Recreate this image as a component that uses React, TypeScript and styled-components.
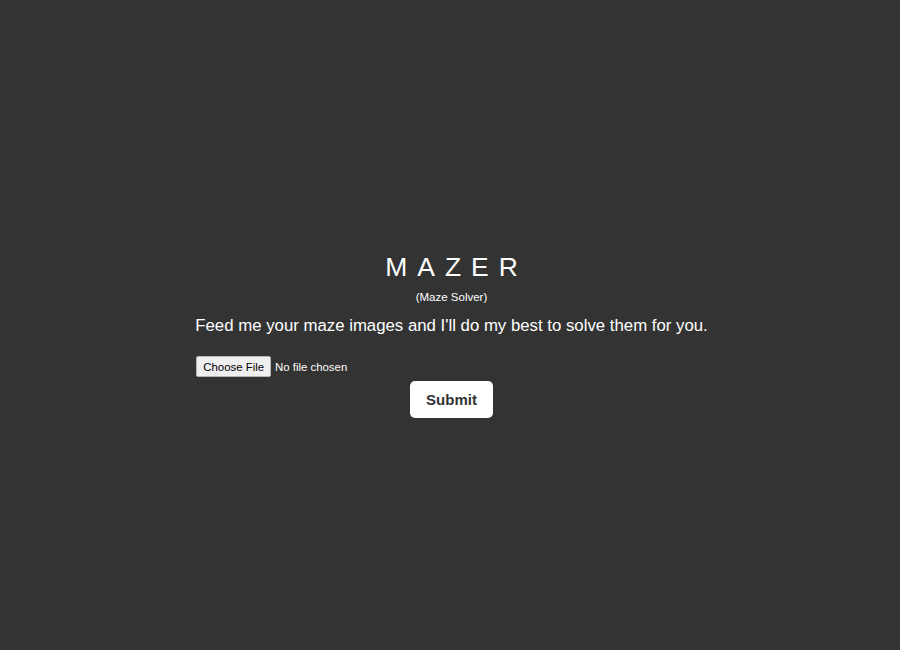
import React from "react";
import styled, { createGlobalStyle } from "styled-components";

const Global = createGlobalStyle`
  html, body {
    margin: 0;
    padding: 0;
    background: #333333;
  }
  body {
    font-family: "Liberation Sans", Arial, sans-serif;
    color: #ffffff;
  }
`;

const Page = styled.main`
  box-sizing: border-box;
  min-height: 650px;
  padding-left: 3px;
  display: flex;
  align-items: center;
  justify-content: center;
`;

const Panel = styled.form`
  display: flex;
  flex-direction: column;
  align-items: center;
  margin-top: 20px;
`;

const Title = styled.h1`
  margin: 0;
  font-size: 26.5px;
  font-weight: normal;
  letter-spacing: 10px;
  line-height: 30px;
  padding-left: 10px;
`;

const Subtitle = styled.div`
  font-size: 11.5px;
  line-height: 14px;
  margin-top: 8px;
`;

const Lead = styled.p`
  font-size: 16.8px;
  line-height: 20px;
  margin: 12px 0 0;
`;

const FileRow = styled.div`
  align-self: stretch;
  margin-top: 20px;
  padding-left: 1px;
  display: flex;
`;

const FileInput = styled.input`
  height: 21px;
  font-family: "Liberation Sans", Arial, sans-serif;
  font-size: 11.4px;
  color: #ffffff;

  &::file-selector-button {
    height: 21px;
    margin: 0 4px 0 0;
    padding: 0 6px;
    font-family: "Liberation Sans", Arial, sans-serif;
    font-size: 11.4px;
    color: #000000;
    background: #efefef;
    border: 1px solid #b4b4b4;
    border-radius: 2px;
  }
`;

const SubmitButton = styled.button`
  margin-top: 4px;
  width: 83px;
  height: 37px;
  border: none;
  border-radius: 5px;
  background: #ffffff;
  color: #333333;
  font-family: "Liberation Sans", Arial, sans-serif;
  font-size: 15px;
  font-weight: bold;
  cursor: pointer;
`;

export default function App() {
  return (
    <>
      <Global />
      <Page>
        <Panel onSubmit={(e) => e.preventDefault()}>
          <Title>MAZER</Title>
          <Subtitle>(Maze Solver)</Subtitle>
          <Lead>Feed me your maze images and I'll do my best to solve them for you.</Lead>
          <FileRow>
            <FileInput type="file" />
          </FileRow>
          <SubmitButton type="submit">Submit</SubmitButton>
        </Panel>
      </Page>
    </>
  );
}
